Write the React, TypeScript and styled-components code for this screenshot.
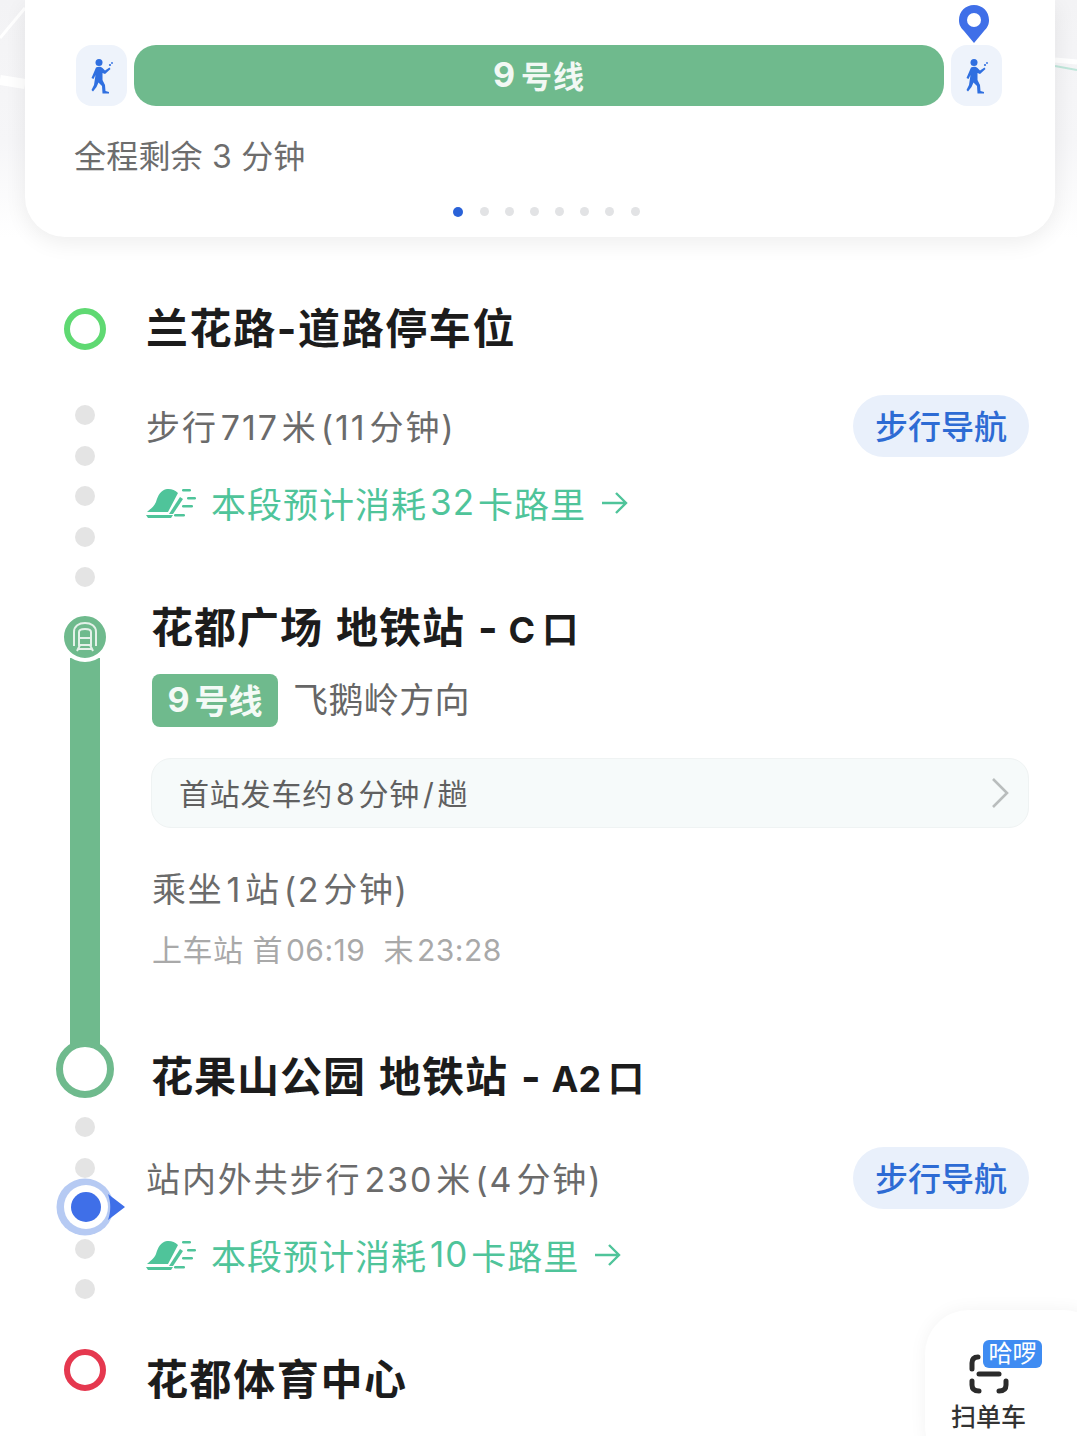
import React from 'react';
import styled, { createGlobalStyle } from 'styled-components';

const GlobalStyle = createGlobalStyle`
  html, body {
    margin: 0;
    padding: 0;
    background: #fff;
  }
  body {
    font-family: Inter, "Noto Sans CJK SC", sans-serif;
  }
`;

const GREEN = '#6fba8d';
const MINT = '#4fc49a';
const BLUE = '#3f6fe8';

const Page = styled.div`
  position: relative;
  width: 1077px;
  height: 1436px;
  overflow: hidden;
  background: #fff;
`;

const TopZone = styled.div`
  position: relative;
  height: 237px;
  padding: 0 22px 0 25px;
  background: linear-gradient(180deg, #f3f3f5 0%, #f6f6f8 60%, #fff 100%);
`;

const MapLines = styled.svg`
  position: absolute;
  inset: 0;
`;

const Card = styled.div`
  position: relative;
  height: 237px;
  box-sizing: border-box;
  padding: 45px 53px 0 51px;
  background: #fff;
  border-radius: 0 0 40px 40px;
  box-shadow: 0 6px 22px rgba(0, 0, 0, 0.07);
`;

const Strip = styled.div`
  display: flex;
  gap: 7px;
  height: 61px;
`;

const WalkTile = styled.div`
  position: relative;
  flex: 0 0 51px;
  display: flex;
  align-items: center;
  justify-content: center;
  background: #eef3fb;
  border-radius: 16px;
`;

const Pin = styled.svg`
  position: absolute;
  top: -41px;
  left: 7px;
`;

const LineBar = styled.div`
  flex: 1;
  display: flex;
  align-items: center;
  justify-content: center;
  padding-bottom: 3px;
  background: ${GREEN};
  border-radius: 22px;
  color: #f2f8f4;
  font-size: 31px;
  font-weight: 600;
  letter-spacing: 1px;
`;

const LineNo = styled.span`
  margin-right: 5px;
  font-size: 34px;
  font-weight: 700;
`;

const Remaining = styled.div`
  margin: 30px 0 0 -2px;
  height: 42px;
  line-height: 42px;
  color: #6d6d6d;
  font-size: 32px;
  letter-spacing: 0.2px;
`;

const Pager = styled.div`
  display: flex;
  justify-content: center;
  gap: 16.2px;
  margin: 29px 0 0 15px;
`;

const PagerDot = styled.span<{ $active?: boolean }>`
  width: ${(p) => (p.$active ? 10 : 9)}px;
  height: ${(p) => (p.$active ? 10 : 9)}px;
  border-radius: 50%;
  background: ${(p) => (p.$active ? '#2a62d8' : '#e2e3e5')};
`;

const Timeline = styled.div`
  padding: 64px 48px 0 43px;
`;

const Row = styled.div`
  display: flex;
`;

const Rail = styled.div<{ $top?: number; $bottom?: number; $height: number }>`
  position: relative;
  flex: 0 0 84px;
  height: ${(p) => p.$height}px;
  box-sizing: border-box;
  padding-top: ${(p) => p.$top ?? 0}px;
  padding-bottom: ${(p) => p.$bottom ?? 0}px;
  display: flex;
  flex-direction: column;
  align-items: center;
`;

const StopRing = styled.span<{ $color: string; $offset: number }>`
  width: 42px;
  height: 42px;
  box-sizing: border-box;
  margin-top: ${(p) => p.$offset}px;
  border: 6px solid ${(p) => p.$color};
  border-radius: 50%;
`;

const Dots = styled.div`
  display: flex;
  flex-direction: column;
  gap: 20.5px;
`;

const Dot = styled.span`
  width: 20px;
  height: 20px;
  border-radius: 50%;
  background: #e4e4e4;
`;

const StationBadge = styled.div`
  position: relative;
  z-index: 1;
  flex: 0 0 auto;
  width: 50px;
  height: 50px;
  box-sizing: border-box;
  display: flex;
  align-items: center;
  justify-content: center;
  background: ${GREEN};
  border: 4px solid #fff;
  border-radius: 50%;
`;

const RideBar = styled.div`
  flex: 1;
  width: 30px;
  margin: -4px 0 -8px;
  background: ${GREEN};
`;

const EndRing = styled.span`
  position: relative;
  flex: 0 0 auto;
  width: 58px;
  height: 58px;
  box-sizing: border-box;
  background: #fff;
  border: 7px solid ${GREEN};
  border-radius: 50%;
`;

const Locator = styled.svg`
  position: absolute;
  top: 73px;
  left: 13px;
`;

const Body = styled.div<{ $indent?: number; $top?: number }>`
  flex: 1;
  min-width: 0;
  padding-left: ${(p) => p.$indent ?? 21}px;
  padding-top: ${(p) => p.$top ?? 0}px;
`;

const Title = styled.div`
  height: 56px;
  line-height: 56px;
  margin-left: -2px;
  color: #1c1c1c;
  font-size: 42px;
  font-weight: 700;
  letter-spacing: 1.6px;
  white-space: nowrap;
`;

const StationTitle = styled(Title)<{ $gap?: number }>`
  margin-top: ${(p) => p.$gap ?? 0}px;
  margin-left: -1px;
  letter-spacing: 1px;
  word-spacing: 2px;
`;

const Code = styled.span`
  margin-left: 10px;
  font-size: 36px;
  letter-spacing: 0;
`;

const Gate = styled.span`
  margin-left: 7px;
  font-size: 36px;
`;

const WalkHead = styled.div`
  display: flex;
  align-items: center;
  justify-content: space-between;
  height: 62px;
`;

const Metric = styled.div`
  margin: -2px 0 0 -2px;
  color: #6b6b6b;
  font-size: 34px;
  letter-spacing: 1.9px;
  white-space: nowrap;
`;

const Num = styled.span`
  margin: 0 3px;
`;

const NavPill = styled.div`
  width: 176px;
  height: 62px;
  padding-bottom: 3px;
  box-sizing: border-box;
  display: flex;
  align-items: center;
  justify-content: center;
  background: #e9f0fb;
  border-radius: 31px;
  color: #2d6bd4;
  font-size: 33px;
  font-weight: 500;
`;

const CalorieLine = styled.div`
  display: flex;
  align-items: center;
  height: 42px;
  margin-top: 24px;
  color: ${MINT};
  font-size: 35px;
  letter-spacing: 1px;
  white-space: nowrap;
`;

const ShoeIcon = styled.svg`
  flex: 0 0 auto;
  margin: 1px 15px 0 -2px;
`;

const CalorieArrow = styled.svg`
  margin: 1px 0 0 14px;
`;

const TagRow = styled.div`
  display: flex;
  align-items: center;
  gap: 15px;
  margin-top: 18px;
`;

const LineTag = styled.div`
  width: 126px;
  height: 53px;
  padding-bottom: 3px;
  box-sizing: border-box;
  display: flex;
  align-items: center;
  justify-content: center;
  background: ${GREEN};
  border-radius: 8px;
  color: #f4faf6;
  font-size: 34px;
  font-weight: 600;
`;

const Direction = styled.div`
  margin-top: -6px;
  color: #666;
  font-size: 35px;
  letter-spacing: 0.4px;
`;

const InfoBar = styled.div`
  display: flex;
  align-items: center;
  justify-content: space-between;
  height: 70px;
  box-sizing: border-box;
  margin: 31px 0 0 -1px;
  padding: 0 18px 0 27px;
  background: #f6fafa;
  border: 1px solid #eff3f3;
  border-radius: 20px;
  color: #606060;
  font-size: 30px;
  letter-spacing: 0.8px;
`;

const InfoText = styled.span`
  margin-top: -3px;
`;

const Ride = styled.div`
  margin-top: 40px;
  height: 44px;
  line-height: 44px;
  color: #6b6b6b;
  font-size: 34px;
  letter-spacing: 1.7px;
`;

const Hours = styled.div`
  margin-top: 16px;
  height: 44px;
  line-height: 44px;
  color: #a9a9a9;
  font-size: 30px;
  letter-spacing: 0.5px;
`;

const HoursGap = styled.span`
  margin-left: 15px;
`;

const ScanFab = styled.div`
  position: absolute;
  right: -30px;
  top: 1310px;
  width: 182px;
  height: 160px;
  background: #fff;
  border-radius: 44px;
  box-shadow: 0 0 18px rgba(0, 0, 0, 0.05);
`;

const ScanIcon = styled.svg`
  position: absolute;
  left: 44px;
  top: 44px;
`;

const ScanBadge = styled.div`
  position: absolute;
  left: 58px;
  top: 30px;
  width: 59px;
  height: 28px;
  display: flex;
  align-items: center;
  justify-content: center;
  background: #3f8cf2;
  border-radius: 6px;
  color: #fff;
  font-size: 24px;
  line-height: 1;
`;

const ScanLabel = styled.div`
  position: absolute;
  left: 26px;
  top: 87px;
  color: #333;
  font-size: 25px;
  font-weight: 500;
`;

const Walker = () => (
  <svg width="23" height="36" viewBox="0 0 23 36" fill="#2f6fe0">
    <circle cx="9" cy="4.5" r="3.5" />
    <path d="M6 9.5 C8 8.5 11 8.5 12.5 10 L15 12.5 L19.5 9.5 L20.5 11 L15 16 L12.5 15 L12.5 22 L15 27 L15.5 33 L19 34 L19 35.5 L12.5 35.5 L12 28 L8.5 24.5 L6.5 29 L3 33.5 L1.5 32 L4 27 L5.5 17 L3.5 21 L1.5 20 Z" />
    <circle cx="20" cy="7" r="1.1" />
    <circle cx="22" cy="5" r="0.9" />
  </svg>
);

const Shoe = () => (
  <ShoeIcon width="50" height="32" viewBox="0 0 50 32" fill={MINT}>
    <path d="M1 25 C4 22 8 20 10 15 C12 8 15 3 21 2 C25 1.5 29 3 32 6 L22 25 Z" />
    <path d="M34 10 L37 12 L27 27 L23 27 Z" />
    <path d="M0 28 H27 L25 31 H2 Z" />
    <rect x="36" y="2" width="9" height="2.5" rx="1.2" />
    <rect x="41" y="10" width="9" height="2.5" rx="1.2" />
    <rect x="36" y="18" width="11" height="2.5" rx="1.2" />
    <rect x="28" y="27" width="11" height="2.5" rx="1.2" />
  </ShoeIcon>
);

const Arrow = () => (
  <CalorieArrow width="28" height="26" viewBox="0 0 28 26" fill="none" stroke={MINT} strokeWidth="2.4">
    <path d="M2 13 H26 M16 3 L26 13 L16 23" />
  </CalorieArrow>
);

const Train = () => (
  <svg width="28" height="32" viewBox="0 0 28 32" fill="none" stroke="#e4f1e9" strokeWidth="2">
    <path d="M3 25 V11 C3 5 8 2 14 2 C20 2 25 5 25 11 V25" />
    <path d="M8 24 V11 C8 8.5 10 8 14 8 C18 8 20 8.5 20 11 V24 Z" />
    <path d="M8 17 H20 M9 24 L6 30 M19 24 L22 30 M7 28 H21" />
  </svg>
);

const WalkStep = ({ metric, calories, top }: { metric: React.ReactNode; calories: string; top?: number }) => (
  <Body $top={top}>
    <WalkHead>
      <Metric>{metric}</Metric>
      <NavPill>步行导航</NavPill>
    </WalkHead>
    <CalorieLine>
      <Shoe />
      本段预计消耗<Num>{calories}</Num>卡路里
      <Arrow />
    </CalorieLine>
  </Body>
);

const App = () => (
  <Page>
    <GlobalStyle />
    <TopZone>
      <MapLines width="1077" height="237" viewBox="0 0 1077 237" fill="none">
        <path d="M0 38 L25 8" stroke="#fff" strokeWidth="3" />
        <path d="M0 80 L25 84" stroke="#fff" strokeWidth="10" />
        <path d="M1055 66 L1077 70" stroke="#bfe6da" strokeWidth="2" />
        <path d="M1055 60 L1077 62" stroke="#fff" strokeWidth="5" />
      </MapLines>
      <Card>
        <Strip>
          <WalkTile>
            <Walker />
          </WalkTile>
          <LineBar><LineNo>9</LineNo>号线</LineBar>
          <WalkTile>
            <Pin width="32" height="40" viewBox="0 0 32 40">
              <path d="M16 39 L6 27 C2 23 1 20 1 16 C1 7.5 7.5 1 16 1 C24.5 1 31 7.5 31 16 C31 20 30 23 26 27 Z" fill={BLUE} />
              <circle cx="16" cy="16" r="7" fill="#fff" />
            </Pin>
            <Walker />
          </WalkTile>
        </Strip>
        <Remaining>全程剩余 3 分钟</Remaining>
        <Pager>
          <PagerDot $active />
          {Array.from({ length: 7 }, (_, i) => (
            <PagerDot key={i} />
          ))}
        </Pager>
      </Card>
    </TopZone>

    <Timeline>
      <Row>
        <Rail $height={94}>
          <StopRing $color="#5fd972" $offset={7} />
        </Rail>
        <Body>
          <Title>兰花路-道路停车位</Title>
        </Body>
      </Row>

      <Row>
        <Rail $height={205} $top={10}>
          <Dots>
            {[0, 1, 2, 3, 4].map((i) => (
              <Dot key={i} />
            ))}
          </Dots>
        </Rail>
        <WalkStep metric={<>步行<Num>717</Num>米<Num>(11</Num>分钟)</>} calories="32" />
      </Row>

      <Row>
        <Rail $height={505} $top={12} $bottom={7}>
          <StationBadge>
            <Train />
          </StationBadge>
          <RideBar />
          <EndRing />
        </Rail>
        <Body $indent={25}>
          <StationTitle>花都广场 地铁站 -<Code>C</Code><Gate>口</Gate></StationTitle>
          <TagRow>
            <LineTag><LineNo>9</LineNo>号线</LineTag>
            <Direction>飞鹅岭方向</Direction>
          </TagRow>
          <InfoBar>
            <InfoText>首站发车约<Num>8</Num>分钟<Num>/</Num>趟</InfoText>
            <svg width="20" height="32" viewBox="0 0 20 32" fill="none" stroke="#b9bdbd" strokeWidth="2.6">
              <path d="M3 2 L17 16 L3 30" />
            </svg>
          </InfoBar>
          <Ride>乘坐<Num>1</Num>站<Num>(2</Num>分钟)</Ride>
          <Hours>上车站 首<Num>06:19</Num><HoursGap>末</HoursGap><Num>23:28</Num></Hours>
          <StationTitle $gap={77}>花果山公园 地铁站 -<Code>A2</Code><Gate>口</Gate></StationTitle>
        </Body>
      </Row>

      <Row>
        <Rail $height={247} $top={12}>
          <Dots>
            {[0, 1, 2, 3, 4].map((i) => (
              <Dot key={i} />
            ))}
          </Dots>
          <Locator width="70" height="58" viewBox="0 0 70 58">
            <circle cx="29" cy="29" r="28.5" fill="#b6caf3" />
            <circle cx="30" cy="29" r="22" fill="#fff" />
            <circle cx="30" cy="29" r="15" fill={BLUE} />
            <path d="M52 16 L69 29 L52 42 C55 33 55 25 52 16 Z" fill={BLUE} />
          </Locator>
        </Rail>
        <WalkStep top={42} metric={<>站内外共步行<Num>230</Num>米<Num>(4</Num>分钟)</>} calories="10" />
      </Row>

      <Row>
        <Rail $height={60}>
          <StopRing $color="#e5384f" $offset={-3} />
        </Rail>
        <Body>
          <Title>花都体育中心</Title>
        </Body>
      </Row>
    </Timeline>

    <ScanFab>
      <ScanIcon width="40" height="40" viewBox="0 0 40 40" fill="none" stroke="#2b2b2b" strokeWidth="5" strokeLinecap="round">
        <path d="M3 15 V9 C3 5 5 3 9 3" />
        <path d="M3 27 V31 C3 35 5 37 10 37" />
        <path d="M37 27 V31 C37 35 35 37 30 37" />
        <path d="M10 20 H30" />
      </ScanIcon>
      <ScanBadge>哈啰</ScanBadge>
      <ScanLabel>扫单车</ScanLabel>
    </ScanFab>
  </Page>
);

export default App;
